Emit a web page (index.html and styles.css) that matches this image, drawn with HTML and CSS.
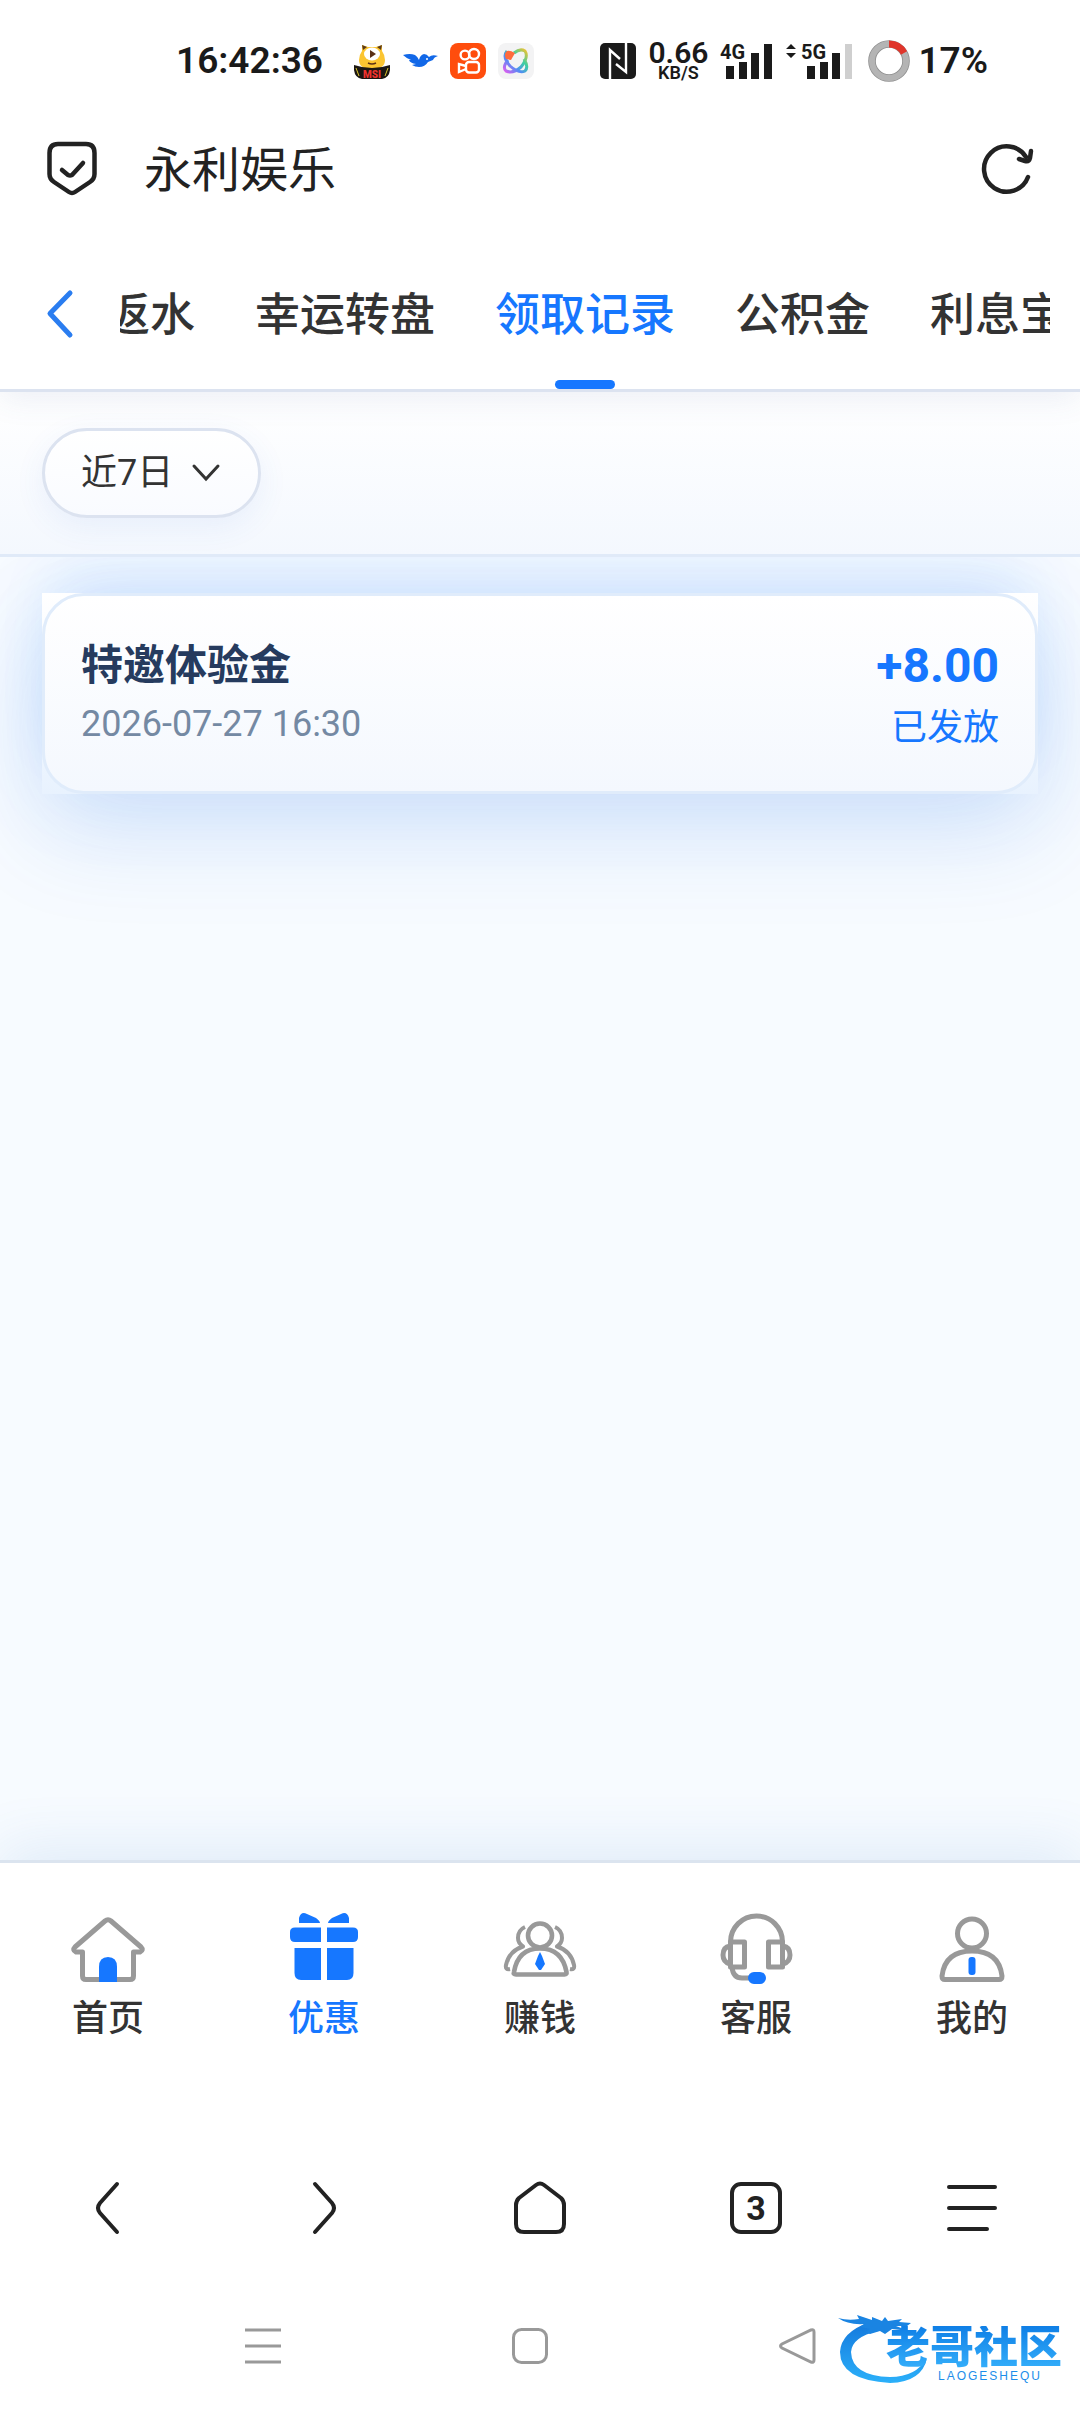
FILE: index.html
```html
<!DOCTYPE html>
<html lang="zh-CN">
<head>
    <meta charset="UTF-8">
    <meta name="viewport" content="width=device-width, initial-scale=1.0">
    <title>永利娱乐</title>
    <link rel="stylesheet" href="styles.css">
</head>
<body>

<div class="status-bar">
    <span class="clock">16:42:36</span>
    <div class="status-apps">
        <svg width="36" height="36" viewBox="0 0 36 36">
            <path d="M8 2L14 4H22L28 2L28 8Q31 12 31 17Q31 26 18 26Q5 26 5 17Q5 12 8 8z" fill="#fbc531"/>
            <path d="M8 2L13 4L9 7zM28 2L23 4L27 7z" fill="#5b3a1a"/>
            <ellipse cx="18" cy="11" rx="8" ry="6.500" fill="#fff"/>
            <path d="M16 7L22 11L16 15z" fill="#5b3016"/>
            <path d="M14 20Q18 22 22 20" fill="none" stroke="#5b3016" stroke-width="1.5"/>
            <path d="M0 22Q18 28 36 22V27Q35 35 28 36H8Q1 35 0 27z" fill="#1c1712"/>
            <path d="M2 25L5 33M34 25L31 33" stroke="#d9c52b"/>
            <text x="18" y="35" text-anchor="middle" font-size="10" font-weight="900" fill="#f0322e">MSI</text>
        </svg>
        <svg width="36" height="36" viewBox="0 0 36 36">
            <path d="M1 12Q8 10 13 12Q16 14 17 17Q18 12 22 11Q25 11 27 14Q30 11 36 13Q32 14 31 17L26 19Q23 24 17 24Q13 24 10 22L14 21Q8 20 7 17L9 17Q4 15 1 12z" fill="#1268e8"/>
            <circle cx="25" cy="16" r="1" fill="#fff"/>
        </svg>
        <svg width="36" height="36" viewBox="0 0 36 36">
            <rect width="36" height="36" rx="8" fill="#ff4d0d"/>
            <g fill="none" stroke="#fff" stroke-width="2.4">
                <circle cx="15" cy="12" r="4.4"/>
                <circle cx="24" cy="11" r="5"/>
                <rect x="16" y="19" width="13" height="10.500" rx="3"/>
                <path d="M16 23L9 21V29L16 26"/>
            </g>
        </svg>
        <svg width="36" height="36" viewBox="0 0 36 36">
            <defs>
                <linearGradient id="rainbow" x1="0" y1="1" x2="1" y2="0">
                    <stop offset="0" stop-color="#e05cf0"/>
                    <stop offset="0.35" stop-color="#4f8df5"/>
                    <stop offset="0.65" stop-color="#3fd0a0"/>
                    <stop offset="1" stop-color="#f2c230"/>
                </linearGradient>
            </defs>
            <rect width="36" height="36" rx="8" fill="#f3f3f4"/>
            <g fill="none" stroke="url(#rainbow)" stroke-width="3" stroke-linejoin="round">
                <path d="M10 17Q4 24 8 28Q15 31 23 24Q31 14 27 8Q22 5 16 10"/>
                <path d="M9 8Q4 14 12 23Q21 31 27 28Q31 24 26 16"/>
            </g>
            <path d="M8 9Q10 6 17 10L13 17L8 16Q6 12 8 9z" fill="#ff6a3c"/>
        </svg>
    </div>
    <div class="status-right">
        <svg width="36" height="36" viewBox="0 0 36 36">
            <rect width="36" height="36" rx="5" fill="#1a1a1a"/>
            <path d="M10 36V7L20 16M26 0V29L16 21" fill="none" stroke="#fff" stroke-width="2.4"/>
        </svg>
        <div class="speed"><b>0.66</b><span>KB/S</span></div>
        <svg width="54" height="38" viewBox="0 0 54 38">
            <text x="0" y="17" font-size="20" font-weight="700" fill="#1a1a1a">4G</text>
            <path d="M6 24h8v13h-8zM19 20h8v17h-8zM31 11h8v26h-8zM44 2h8v35h-8z" fill="#1a1a1a"/>
        </svg>
        <svg width="70" height="38" viewBox="0 0 70 38">
            <path d="M5 2L10 7H0zM5 16L10 11H0z" fill="#1a1a1a"/>
            <text x="15" y="17" font-size="20" font-weight="700" fill="#1a1a1a">5G</text>
            <path d="M21 24h8v13h-8zM34 20h8v17h-8zM46 11h8v26h-8z" fill="#1a1a1a"/>
            <path d="M59 2h7v35h-7z" fill="#cfcfcf"/>
        </svg>
        <div class="battery">
            <svg width="42" height="42" viewBox="0 0 42 42">
                <circle cx="21" cy="21" r="17" fill="none" stroke="#8f8f8f" stroke-width="7.600"/>
                <circle cx="21" cy="21" r="17" fill="none" stroke="#b4b4b4" stroke-width="6"/>
                <path d="M21 4A17 17 0 0 1 36 13" fill="none" stroke="#e0352b" stroke-width="7"/>
            </svg>
            <span>17%</span>
        </div>
    </div>
</div>

<div class="browser-bar">
    <svg width="52" height="56" viewBox="0 0 52 56" fill="none" stroke="#222" stroke-width="4.500" stroke-linecap="round" stroke-linejoin="round">
        <path d="M12 3H40Q48.500 3 48.500 12V33Q48.500 38 44 41L29 51Q26 53 23 51L8 41Q3.500 38 3.500 33V12Q3.500 3 12 3z"/>
        <path d="M16 29L22 34Q24 35 26 34L37 22"/>
    </svg>
    <span class="site-title">永利娱乐</span>
    <button class="icon-btn" type="button" aria-label="刷新">
        <svg width="52" height="54" viewBox="0 0 52 54" fill="none" stroke="#222" stroke-width="4.500" stroke-linecap="round" stroke-linejoin="round">
            <path d="M46 35A22.700 22.700 0 1 1 44 15"/>
            <path d="M37 17L43 19Q47 20 48 16L49 9"/>
        </svg>
    </button>
</div>

<header class="app-header">
    <button class="back-btn" type="button" aria-label="返回">
        <svg width="30" height="50" viewBox="0 0 30 50"><path d="M25 4L5 24.500L25 46" fill="none" stroke="#2a7df0" stroke-width="5" stroke-linecap="round" stroke-linejoin="round"/></svg>
    </button>
    <nav class="tabs">
        <a href="#">返水</a>
        <a href="#">幸运转盘</a>
        <a href="#" class="active">领取记录</a>
        <a href="#">公积金</a>
        <a href="#">利息宝</a>
    </nav>
</header>

<div class="filter-bar">
    <label class="filter-pill">
        <select aria-label="日期">
            <option>近7日</option>
        </select>
        <svg width="28" height="18" viewBox="0 0 28 18"><path d="M2 2L14 15L26 2" fill="none" stroke="#333" stroke-width="3" stroke-linecap="round"/></svg>
    </label>
</div>

<main class="records">
    <div class="record-wrap">
        <div class="record">
            <div class="record-info">
                <h3>特邀体验金</h3>
                <time>2026-07-27 16:30</time>
            </div>
            <div class="record-amount">
                <strong>+8.00</strong>
                <span>已发放</span>
            </div>
        </div>
    </div>
</main>

<nav class="bottom-nav">
    <a href="#">
        <svg width="84" height="80" viewBox="0 0 84 80" fill="none" stroke="#999" stroke-width="5" stroke-linejoin="round">
            <path d="M16.500 45V69Q16.500 72.500 20 72.500H64Q67.500 72.500 67.500 69V45H74Q78 43 75 40L45 14Q42 11.500 39 14L9 40Q6 43 10 45z"/>
            <path d="M33 75V60Q33 50 42 50Q51 50 51 60V75z" fill="#1677ff" stroke="none"/>
        </svg>
        <span>首页</span>
    </a>
    <a href="#" class="active">
        <svg width="84" height="80" viewBox="0 0 84 80" fill="#1677ff">
            <path d="M17 16V11Q19 4 25 7L34 11Q38 14 38 16zM67 16V11Q65 4 59 7L50 11Q46 14 46 16z"/>
            <path d="M13 20.500H39V35H13Q8 35 8 30V25Q8 20.500 13 20.500zM45 20.500H71Q76 20.500 76 25V30Q76 35 71 35H45z"/>
            <path d="M12.500 41H39V73H19Q12.500 73 12.500 66zM45 41H71.500V66Q71.500 73 65 73H45z"/>
        </svg>
        <span>优惠</span>
    </a>
    <a href="#">
        <svg width="84" height="80" viewBox="0 0 84 80" fill="none" stroke="#999" stroke-width="4.600" stroke-linejoin="round">
            <circle cx="42" cy="28.500" r="12"/>
            <path d="M16 65Q20 41.500 42 41.500Q64 41.500 68.500 65Q69 67.500 66.500 67.500H18Q15 67.500 16 65z"/>
            <path d="M27 20Q20 23 20 31Q20 36 25 39.500Q11 44 8 58Q7 63 12 62M57 20Q64 23 64 31Q64 36 59 39.500Q73 44 76 58Q77 63 72 62" stroke-width="4"/>
            <path d="M42 45L44 49L47 57L43 63H41L37 57L40 49z" fill="#1677ff" stroke="none"/>
        </svg>
        <span>赚钱</span>
    </a>
    <a href="#">
        <svg width="84" height="80" viewBox="0 0 84 80" fill="none" stroke="#999" stroke-width="5" stroke-linejoin="round">
            <path d="M16.500 35A26 26 0 0 1 68.500 35M18 60Q19 71 28 71H35"/>
            <rect x="16.500" y="35" width="14" height="25"/>
            <rect x="54.500" y="35" width="14" height="25"/>
            <path d="M16 39Q9 40 9 48Q9 55 16 57M69 39Q76 40 76 48Q76 55 69 57"/>
            <rect x="34" y="65" width="18" height="12" rx="6" fill="#1677ff" stroke="none"/>
        </svg>
        <span>客服</span>
    </a>
    <a href="#">
        <svg width="84" height="80" viewBox="0 0 84 80" fill="none" stroke="#999" stroke-width="5" stroke-linejoin="round">
            <circle cx="42" cy="26.500" r="14.500"/>
            <path d="M12 69Q15 44 42 44Q69 44 72 69Q72 72.500 69 72.500H15Q12 72.500 12 69z"/>
            <rect x="38.500" y="50" width="7" height="18" rx="3" fill="#1677ff" stroke="none"/>
        </svg>
        <span>我的</span>
    </a>
</nav>

<div class="toolbar">
    <button type="button" aria-label="后退">
        <svg width="60" height="60" viewBox="0 0 60 60"><path d="M39 6L22 25Q18 30 22 35L39 54"/></svg>
    </button>
    <button type="button" aria-label="前进">
        <svg width="60" height="60" viewBox="0 0 60 60"><path d="M21 6L38 25Q42 30 38 35L21 54"/></svg>
    </button>
    <button type="button" aria-label="主页">
        <svg width="60" height="60" viewBox="0 0 60 60"><path d="M26 7Q30 4 34 7L51 20Q54 23 54 27V46Q54 54 46 54H14Q6 54 6 46V27Q6 23 9 20z"/></svg>
    </button>
    <button type="button" aria-label="标签页"><span class="tab-count">3</span></button>
    <button type="button" aria-label="菜单">
        <svg width="60" height="60" viewBox="0 0 60 60"><path d="M7 9H53M7 30H53M7 51H45"/></svg>
    </button>
</div>

<div class="system-nav">
    <button type="button" aria-label="最近任务">
        <svg width="40" height="40" viewBox="0 0 40 40"><path d="M2 4H38M2 20H38M2 36H38"/></svg>
    </button>
    <button type="button" aria-label="桌面">
        <svg width="40" height="40" viewBox="0 0 40 40"><rect x="3.500" y="3.500" width="33" height="33" rx="8"/></svg>
    </button>
    <button type="button" aria-label="返回">
        <svg width="40" height="40" viewBox="0 0 40 40"><path d="M34 4Q37 3 37 6V34Q37 37 34 36L5 22Q2 20 5 18z"/></svg>
    </button>
</div>

<div class="watermark">
    <svg width="240" height="100" viewBox="0 0 240 100">
        <defs>
            <linearGradient id="wave" x1="0" y1="0" x2="0" y2="1">
                <stop offset="0" stop-color="#1478dc"/>
                <stop offset="1" stop-color="#2bb0fa"/>
            </linearGradient>
        </defs>
        <path d="M40 22Q11 32 10 52Q10 80 60 83Q92 82 97 58Q86 77 60 77Q22 76 21 52Q22 37 48 31z" fill="url(#wave)"/>
        <path d="M8 18Q18 21 29 19L27 15Q36 18 42 20L42 17L52 21L55 17L58 21L72 19L69 22L81 23L77 26L66 26L79 31L62 29L55 34L50 31L40 34L36 32L40 29L30 27L34 24Q18 25 8 18z" fill="#1a84e2"/>
    </svg>
    <div class="watermark-text">
        <b>老哥社区</b>
        <span>LAOGESHEQU</span>
    </div>
</div>

</body>
</html>
```
FILE: styles.css
```css
* {
    box-sizing: border-box;
}
body {
    margin: 0;
    min-height: 100vh;
    display: flex;
    flex-direction: column;
    position: relative;
    font-family: Roboto, "Noto Sans CJK SC", sans-serif;
    font-size: 36px;
    line-height: 48px;
    color: #333;
    background-color: #fff;
}
svg {
    display: block;
    flex-shrink: 0;
    overflow: visible;
}
a {
    color: inherit;
    text-decoration: none;
}
button {
    display: flex;
    align-items: center;
    justify-content: center;
    padding: 0;
    border: none;
    background: none;
    font: inherit;
    color: inherit;
}

/* phone status bar */
.status-bar {
    display: flex;
    align-items: center;
    height: 122px;
    padding: 0 92px 0 176px;
    color: #1a1a1a;
    font-weight: 600;
}
.clock {
    width: 146px;
    margin-right: 32px;
    font-size: 37px;
}
.status-apps {
    display: flex;
    gap: 12px;
}
.status-right {
    display: flex;
    align-items: center;
    gap: 12px;
    margin-left: auto;
}
.speed {
    display: flex;
    flex-direction: column;
    align-items: center;
}
.speed b {
    font-size: 30px;
    line-height: 24px;
    font-weight: 600;
}
.speed span {
    font-size: 18px;
    line-height: 16px;
}
.battery {
    display: flex;
    align-items: center;
    gap: 8px;
    font-size: 37px;
}

/* browser address bar */
.browser-bar {
    display: flex;
    align-items: center;
    height: 94px;
    padding: 0 46px;
}
.site-title {
    margin-left: 46px;
    font-size: 48px;
    line-height: 44px;
    padding-top: 4px;
    color: #222;
}
.icon-btn {
    margin-left: auto;
}

/* tabs */
.app-header {
    display: flex;
    align-items: center;
    position: relative;
    z-index: 2;
    padding: 23px 30px 0 45px;
    background-color: #fff;
    border-bottom: 3px solid #dce3f0;
    box-shadow: 0 6px 30px rgba(60, 90, 160, 0.1);
    clip-path: inset(0 0 -60px 0);
}
.back-btn {
    width: 75px;
    justify-content: flex-start;
}
.tabs {
    flex: 1;
    display: flex;
    justify-content: center;
    overflow: hidden;
}
.tabs a {
    position: relative;
    flex-shrink: 0;
    padding: 4px 30px 0;
    font-size: 45px;
    line-height: 146px;
    font-weight: 500;
}
.tabs .active {
    color: #1677ff;
}
.tabs .active::after {
    content: "";
    position: absolute;
    left: 50%;
    bottom: 0;
    width: 60px;
    height: 9px;
    margin-left: -30px;
    border-radius: 5px;
    background-color: #1677ff;
}

/* date filter */
.filter-bar {
    display: flex;
    position: relative;
    z-index: 1;
    padding: 36px 42px;
    background: linear-gradient(#fff, #f4f8fe);
    border-bottom: 3px solid #e0eaf8;
}
.filter-pill {
    display: flex;
    align-items: center;
    gap: 18px;
    height: 90px;
    padding: 0 38px 0 36px;
    border: 3px solid #dce3f0;
    border-radius: 45px;
    background: linear-gradient(#fff, #f9fbff);
    box-shadow: 0 9px 30px rgba(60, 110, 220, 0.08);
}
.filter-pill select {
    appearance: none;
    padding: 0;
    border: none;
    background: none;
    font: inherit;
    color: #333;
}

/* claim records */
.records {
    flex: 1;
    padding: 36px 42px;
    background-color: #f7fbff;
    overflow: hidden;
}
.record-wrap {
    background: linear-gradient(#fff, #e8f2fe);
    box-shadow: 0 -36px 60px -12px rgba(22, 119, 255, 0.09), 0 0 90px rgba(22, 119, 255, 0.08), 0 36px 100px rgba(22, 100, 220, 0.15);
}
.record {
    display: flex;
    justify-content: space-between;
    padding: 46px 36px 39px;
    border: 3px solid #e0ecfb;
    border-radius: 42px;
    background: linear-gradient(#fff, #f4f8fe);
}
.record-info,
.record-amount {
    display: flex;
    flex-direction: column;
}
.record-info {
    gap: 10px;
}
.record-amount {
    gap: 14px;
    align-items: flex-end;
    color: #1677ff;
}
.record h3 {
    margin: 0;
    font-size: 42px;
    line-height: 48px;
    color: #263b5e;
}
.record time {
    color: #7489a3;
}
.record strong {
    font-size: 48px;
}

/* bottom navigation */
.bottom-nav {
    display: grid;
    grid-template-columns: repeat(5, 1fr);
    position: relative;
    padding: 44px 0 79px;
    background-color: #fff;
    border-top: 3px solid #dbe4ef;
    box-shadow: 0 -12px 54px rgba(60, 120, 200, 0.12);
    clip-path: inset(-80px 0 0 0);
}
.bottom-nav a {
    display: flex;
    flex-direction: column;
    align-items: center;
    gap: 8px;
    font-weight: 500;
}
.bottom-nav .active {
    color: #1677ff;
}

/* browser toolbar */
.toolbar {
    display: grid;
    grid-template-columns: repeat(5, 1fr);
    height: 172px;
}
.toolbar svg {
    fill: none;
    stroke: #222;
    stroke-width: 4;
    stroke-linecap: round;
    stroke-linejoin: round;
}
.tab-count {
    width: 52px;
    height: 52px;
    border: 4px solid #222;
    border-radius: 11px;
    font-size: 34px;
    line-height: 44px;
    font-weight: 700;
    color: #222;
}

/* system keys */
.system-nav {
    display: grid;
    grid-template-columns: repeat(3, 1fr);
    height: 118px;
    padding: 0 150px 14px 130px;
}
.system-nav svg {
    fill: none;
    stroke: #999;
    stroke-width: 3;
}

/* watermark lies over the system keys */
.watermark {
    position: absolute;
    right: 10px;
    bottom: 12px;
    pointer-events: none;
}
.watermark-text {
    position: absolute;
    right: 8px;
    top: 26px;
    display: flex;
    flex-direction: column;
    align-items: flex-end;
    color: #1c8eea;
}
.watermark-text b {
    font-size: 44px;
    line-height: 44px;
    font-weight: 900;
    background: linear-gradient(#0f7fe6, #35b0fb);
    background-clip: text;
    color: transparent;
}
.watermark-text span {
    margin-right: 20px;
    font-family: "Liberation Sans", sans-serif;
    font-size: 12px;
    line-height: 12px;
    letter-spacing: 2px;
}
```
